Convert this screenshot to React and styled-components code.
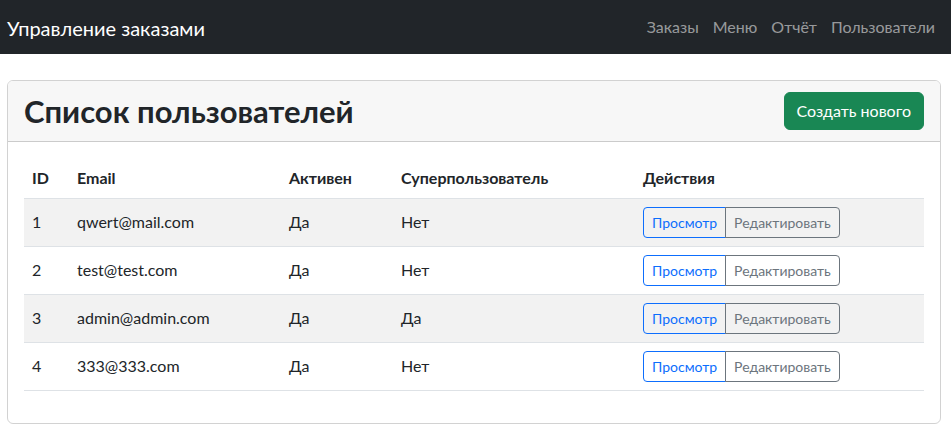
import styled, { createGlobalStyle } from "styled-components";

const GlobalStyle = createGlobalStyle`
  body {
    margin: 0;
    font-family: Lato, "Noto Sans", sans-serif;
    font-size: 16px;
    color: #212529;
    background: #fff;
  }
`;

const users = [
  { id: 1, email: "qwert@mail.com", active: "Да", superuser: "Нет" },
  { id: 2, email: "test@test.com", active: "Да", superuser: "Нет" },
  { id: 3, email: "admin@admin.com", active: "Да", superuser: "Да" },
  { id: 4, email: "333@333.com", active: "Да", superuser: "Нет" },
];

const links = ["Заказы", "Меню", "Отчёт", "Пользователи"];

const App = () => {
  return (
    <>
      <GlobalStyle />
      <Navbar>
        <Brand>Управление заказами</Brand>
        <NavLinks>
          {links.map((l) => (
            <NavLink key={l}>{l}</NavLink>
          ))}
        </NavLinks>
      </Navbar>
      <Container>
        <Card>
          <CardHeader>
            <Title>Список пользователей</Title>
            <CreateButton>Создать нового</CreateButton>
          </CardHeader>
          <CardBody>
            <Table>
              <colgroup>
                <col style={{ width: 45 }} />
                <col style={{ width: 212 }} />
                <col style={{ width: 112 }} />
                <col style={{ width: 242 }} />
                <col />
              </colgroup>
              <thead>
                <tr>
                  <Th>ID</Th>
                  <Th>Email</Th>
                  <Th>Активен</Th>
                  <Th>Суперпользователь</Th>
                  <Th>Действия</Th>
                </tr>
              </thead>
              <tbody>
                {users.map((u, i) => (
                  <Row key={u.id} $striped={i % 2 === 0}>
                    <Td>{u.id}</Td>
                    <Td>{u.email}</Td>
                    <Td>{u.active}</Td>
                    <Td>{u.superuser}</Td>
                    <Td>
                      <BtnGroup>
                        <SmallBtn $color="#0d6efd">Просмотр</SmallBtn>
                        <SmallBtn $color="#6c757d">Редактировать</SmallBtn>
                      </BtnGroup>
                    </Td>
                  </Row>
                ))}
              </tbody>
            </Table>
          </CardBody>
        </Card>
      </Container>
    </>
  );
};

const Navbar = styled.nav`
  height: 54px;
  background: #212529;
  display: flex;
  align-items: center;
  justify-content: space-between;
  padding: 0 9px 0 7px;
  box-sizing: border-box;
`;

const Brand = styled.a`
  color: #fff;
  font-size: 20px;
  line-height: 30px;
  margin-top: 2px;
`;

const NavLinks = styled.div`
  display: flex;
`;

const NavLink = styled.a`
  color: rgba(255, 255, 255, 0.55);
  font-size: 16px;
  line-height: 24px;
  padding: 0 7px;
`;

const Container = styled.div`
  padding: 26px 10px 0 7px;
`;

const Card = styled.div`
  border: 1px solid rgba(0, 0, 0, 0.175);
  border-radius: 6px;
  overflow: hidden;
`;

const CardHeader = styled.div`
  display: flex;
  align-items: center;
  justify-content: space-between;
  padding: 11px 16px;
  background: #f7f7f7;
  border-bottom: 1px solid rgba(0, 0, 0, 0.175);
`;

const Title = styled.h2`
  margin: 0;
  font-size: 31px;
  font-weight: 700;
  line-height: 36px;
`;

const CreateButton = styled.button`
  font-family: inherit;
  font-size: 16px;
  line-height: 24px;
  padding: 6px 12px;
  color: #fff;
  background: #198754;
  border: 1px solid #198754;
  border-radius: 6px;
`;

const CardBody = styled.div`
  padding: 16px;
`;

const Table = styled.table`
  width: 100%;
  border-collapse: collapse;
  margin-bottom: 16px;
  table-layout: fixed;
`;

const Th = styled.th`
  text-align: left;
  font-weight: 700;
  padding: 8px;
  line-height: 24px;
  border-bottom: 1px solid #dee2e6;
`;

const Row = styled.tr`
  background: ${(p) => (p.$striped ? "#f2f2f2" : "#fff")};
`;

const Td = styled.td`
  padding: 8px;
  line-height: 24px;
  border-bottom: 1px solid #dee2e6;
  vertical-align: baseline;
`;

const BtnGroup = styled.div`
  display: inline-flex;
`;

const SmallBtn = styled.button`
  font-family: inherit;
  font-size: 14px;
  line-height: 21px;
  padding: 4px 8px;
  background: transparent;
  color: ${(p) => p.$color};
  border: 1px solid ${(p) => p.$color};
  border-radius: 0;

  &:first-child {
    border-radius: 4px 0 0 4px;
  }
  &:last-child {
    border-radius: 0 4px 4px 0;
    margin-left: -1px;
  }
`;

export default App;
